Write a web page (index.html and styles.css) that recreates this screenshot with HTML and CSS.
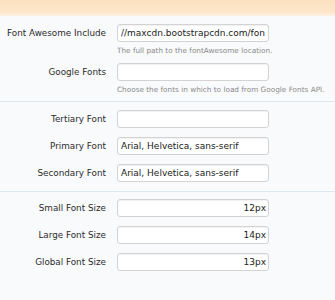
FILE: index.html
```html
<!DOCTYPE html>
<html lang="en">
<head>
    <meta charset="UTF-8">
    <meta name="viewport" content="width=device-width, initial-scale=1.0">
    <title>Font Options</title>
    <link rel="stylesheet" href="styles.css">
</head>
<body>
    <div class="top-bar"></div>

    <div class="section first">
        <div class="row">
            <label for="faInclude">Font Awesome Include</label>
            <div class="control">
                <input type="text" id="faInclude" value="//maxcdn.bootstrapcdn.com/font-awesome/4.3.0/css/font-awesome.min.css">
                <p class="hint">The full path to the fontAwesome location.</p>
            </div>
        </div>
        <div class="row">
            <label for="googleFonts">Google Fonts</label>
            <div class="control">
                <input type="text" id="googleFonts" value="">
                <p class="hint">Choose the fonts in which to load from Google Fonts API.</p>
            </div>
        </div>
    </div>

    <div class="section">
        <div class="row">
            <label for="tertiaryFont">Tertiary Font</label>
            <div class="control"><input type="text" id="tertiaryFont" value=""></div>
        </div>
        <div class="row">
            <label for="primaryFont">Primary Font</label>
            <div class="control"><input type="text" id="primaryFont" value="Arial, Helvetica, sans-serif"></div>
        </div>
        <div class="row">
            <label for="secondaryFont">Secondary Font</label>
            <div class="control"><input type="text" id="secondaryFont" value="Arial, Helvetica, sans-serif"></div>
        </div>
    </div>

    <div class="section last">
        <div class="row">
            <label for="smallSize">Small Font Size</label>
            <div class="control"><input type="text" id="smallSize" class="size" value="12px"></div>
        </div>
        <div class="row">
            <label for="largeSize">Large Font Size</label>
            <div class="control"><input type="text" id="largeSize" class="size" value="14px"></div>
        </div>
        <div class="row">
            <label for="globalSize">Global Font Size</label>
            <div class="control"><input type="text" id="globalSize" class="size" value="13px"></div>
        </div>
    </div>
</body>
</html>
```

FILE: styles.css
```css
:root {
    --page-bg: #f9fafc;
    --label-color: #2b2b2b;
    --hint-color: #8a8a8a;
    --input-border: #d3d3d3;
    --divider: #dde8f0;
}

* {
    box-sizing: border-box;
    margin: 0;
    padding: 0;
}

body {
    font-family: "DejaVu Sans", Verdana, sans-serif;
    font-size: 8.8px;
    color: var(--label-color);
    background: var(--page-bg);
    width: 335px;
    height: 300px;
    overflow: hidden;
}

.top-bar {
    height: 16px;
    background: linear-gradient(to bottom, #fbe0be 0%, #fce6cb 75%, #fdf1e3 100%);
}

.section {
    display: flex;
    flex-direction: column;
    gap: 9px;
    padding: 8px 0 9px;
    border-bottom: 1px solid var(--divider);
}

.section.first {
    gap: 6px;
    padding-bottom: 5px;
}

.section.last {
    border-bottom: none;
    padding-top: 7px;
}

.row {
    display: grid;
    grid-template-columns: 106px 152px;
    column-gap: 11px;
    align-items: start;
}

label {
    text-align: right;
    line-height: 18px;
    height: 18px;
    white-space: nowrap;
}

input {
    display: block;
    width: 152px;
    height: 18px;
    padding: 0 3px;
    border: 1px solid var(--input-border);
    border-radius: 3px;
    background: #fff;
    box-shadow: inset 0 1px 1px rgba(0, 0, 0, 0.06);
    font-family: "DejaVu Sans", Verdana, sans-serif;
    font-size: 9px;
    color: #1a1a1a;
}

input.size {
    text-align: right;
    padding-right: 2px;
}

.hint {
    margin-top: 3px;
    font-size: 7.3px;
    line-height: 12px;
    color: var(--hint-color);
    white-space: nowrap;
}
```
